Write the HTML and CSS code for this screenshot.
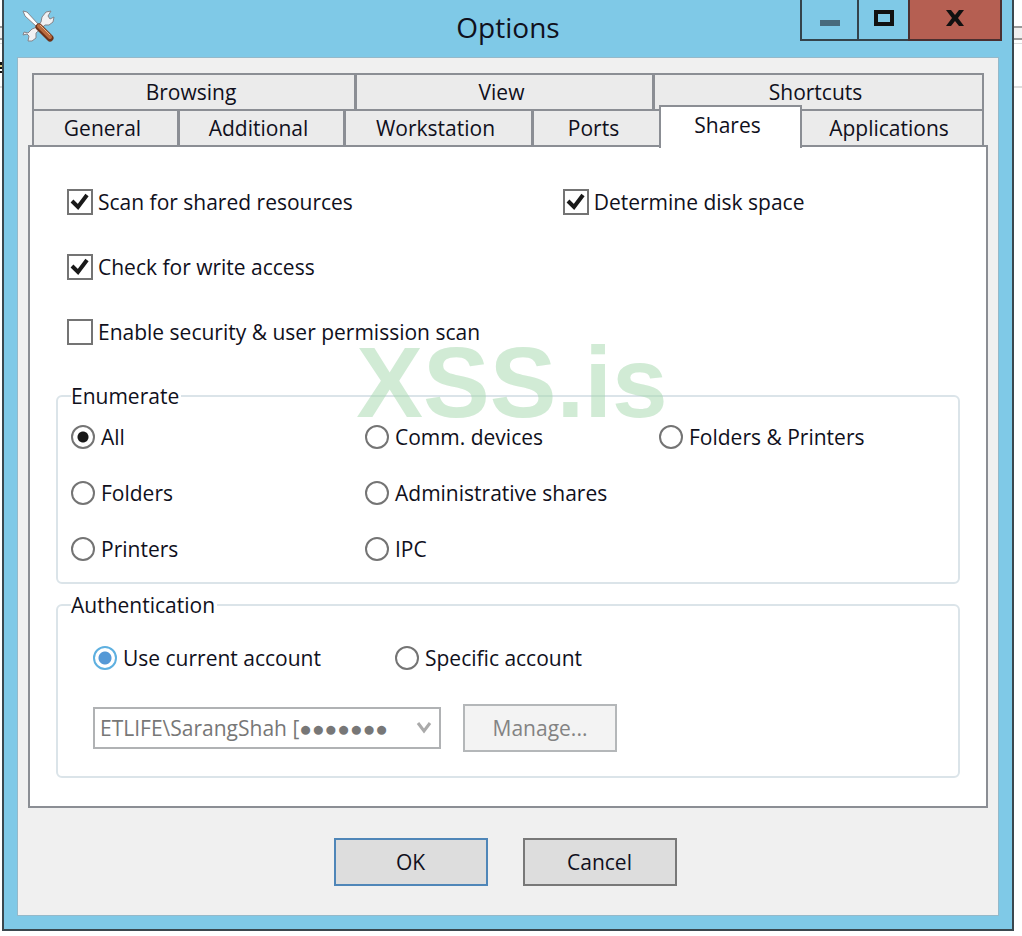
FILE: index.html
```html
<!DOCTYPE html>
<html lang="en">
<head>
    <meta charset="UTF-8">
    <meta name="viewport" content="width=device-width, initial-scale=1.0">
    <title>Options</title>
    <link rel="stylesheet" href="styles.css">
</head>
<body>
    <div class="window">
        <header class="titlebar">
            <svg class="app-icon" viewBox="0 0 34 34" aria-hidden="true">
                <path d="M2 22l4 1 4-4 5-2 4-5 1-5 4-5 5-1-3 5 2 3 4-2-1 5-4 3-4 0-9 8 0 5-4 3-4 0 1-5-2-2-4 1z" fill="#f1f1f3" stroke="#85858b"/>
                <path d="M1 1l4 1 12 13-2 2L3 6z" fill="#fff" stroke="#85858b"/>
                <path d="M17 17l11 11" stroke="#6d3319" stroke-width="7" stroke-linecap="round"/>
                <path d="M17 16l11 11" stroke="#b96b3e" stroke-width="4" stroke-linecap="round"/>
                <path d="M18 15l10 10" stroke="#e9b48b" stroke-width="1"/>
            </svg>
            <h1 class="title">Options</h1>
            <div class="window-controls">
                <button class="control" type="button" aria-label="Minimize">
                    <svg width="20" height="16" viewBox="0 0 20 16"><path d="M0 10h20v6H0z" fill="#486a7c"/></svg>
                </button>
                <button class="control maximize" type="button" aria-label="Maximize">
                    <svg width="20" height="16" viewBox="0 0 20 16"><path d="M2 2h16v12H2z" fill="none" stroke="#111" stroke-width="4"/></svg>
                </button>
                <button class="control close" type="button" aria-label="Close">
                    <svg width="20" height="16" viewBox="0 0 20 16"><path d="M1 0h5l4 5 4-5h5l-6 8 6 8h-5l-4-5-4 5H1l6-8z" fill="#111"/></svg>
                </button>
            </div>
        </header>

        <main class="client">
            <div class="tabs" role="tablist">
                <div class="tab-row row-back">
                    <button class="tab" type="button" role="tab">Browsing</button>
                    <button class="tab" type="button" role="tab">View</button>
                    <button class="tab" type="button" role="tab">Shortcuts</button>
                </div>
                <div class="tab-row row-front">
                    <button class="tab" type="button" role="tab">General</button>
                    <button class="tab" type="button" role="tab">Additional</button>
                    <button class="tab" type="button" role="tab">Workstation</button>
                    <button class="tab" type="button" role="tab">Ports</button>
                    <button class="tab selected" type="button" role="tab" aria-selected="true">Shares</button>
                    <button class="tab" type="button" role="tab">Applications</button>
                </div>
            </div>

            <section class="panel" role="tabpanel" aria-label="Shares">
                <div class="checks">
                    <label class="option"><input type="checkbox" checked><span>Scan for shared resources</span></label>
                    <label class="option"><input type="checkbox" checked><span>Determine disk space</span></label>
                    <label class="option wide"><input type="checkbox" checked><span>Check for write access</span></label>
                    <label class="option wide"><input type="checkbox"><span>Enable security &amp; user permission scan</span></label>
                </div>

                <fieldset class="group">
                    <legend>Enumerate</legend>
                    <div class="radios">
                        <label class="option"><input type="radio" name="enumerate" checked><span>All</span></label>
                        <label class="option"><input type="radio" name="enumerate"><span>Comm. devices</span></label>
                        <label class="option"><input type="radio" name="enumerate"><span>Folders &amp; Printers</span></label>
                        <label class="option"><input type="radio" name="enumerate"><span>Folders</span></label>
                        <label class="option wide"><input type="radio" name="enumerate"><span>Administrative shares</span></label>
                        <label class="option"><input type="radio" name="enumerate"><span>Printers</span></label>
                        <label class="option wide"><input type="radio" name="enumerate"><span>IPC</span></label>
                    </div>
                </fieldset>

                <fieldset class="group auth">
                    <legend>Authentication</legend>
                    <div class="accounts">
                        <label class="option"><input class="hot" type="radio" name="account" checked><span>Use current account</span></label>
                        <label class="option"><input type="radio" name="account"><span>Specific account</span></label>
                    </div>
                    <div class="credentials">
                        <select class="combo" aria-label="Account" disabled>
                            <option>ETLIFE\SarangShah [●●●●●●●</option>
                        </select>
                        <button class="btn" type="button" disabled>Manage...</button>
                    </div>
                </fieldset>
                <div class="watermark">XSS.is</div>
            </section>

            <footer class="actions">
                <button class="btn default" type="button">OK</button>
                <button class="btn" type="button">Cancel</button>
            </footer>
        </main>
    </div>
</body>
</html>
```

FILE: styles.css
```css
* { margin: 0; padding: 0; box-sizing: border-box; }

body {
    padding: 0 8px 4px 2px;
    font-family: 'Open Sans', 'Liberation Sans', sans-serif;
    font-size: 21px;
    line-height: 26px;
    color: #10101c;
    /* edges of the window behind the dialog */
    background:
        linear-gradient(#111 0 3px, #d8cb83 3px 5px, #111 5px 7px, #fff 7px 9px, #111 9px 11px) 0 62px / 3px 11px no-repeat,
        linear-gradient(#fff 26px, #999 26px 28px, #f0f0f0 28px 38px, #999 38px 40px, #fff 40px 43px, #ddd 43px 44px, #fff 44px 86px, #ddd 86px 88px, #fff 88px) no-repeat;
}

button, select { font: inherit; color: inherit; }

.window {
    background: #7fc9e7;
    border: 2px solid #3a474e;
    border-top: 0;
    padding: 0 13px 13px;
}

.titlebar {
    display: grid;
    grid-template-columns: 1fr auto 1fr;
    align-items: start;
    height: 57px;
}

.app-icon {
    width: 34px;
    height: 34px;
    margin: 10px 0 0 5px;
}

.title {
    font-size: 28px;
    font-weight: 400;
    line-height: 54px;
}

.window-controls {
    display: flex;
    justify-self: end;
    margin-right: -3px;
}

.control {
    display: flex;
    justify-content: center;
    align-items: center;
    width: 57px;
    height: 41px;
    padding-bottom: 3px;
    background: none;
    border: 2px solid #34434b;
    border-width: 0 0 2px 2px;
}

.maximize { width: 51px; }

.close {
    width: 94px;
    background: #b55f52;
    border-color: #4a2f30;
    border-right-width: 2px;
}

.client {
    background: #f0f0f0;
    border: 1px solid #94b9ca;
    padding: 15px 10px 29px;
}

.tabs { padding: 0 4px; }

.tab-row { display: grid; }

.row-back {
    grid-template-columns: 322fr 298fr 330fr;
    border-right: 2px solid #8b8e94;
}

.row-front {
    grid-template-columns: 145fr 166fr 188fr 128fr 143fr 180fr;
    border-right: 2px solid #8b8e94;
}

.tab {
    height: 36px;
    padding-right: 6px;
    background: #ebebeb;
    border: 0 solid #8b8e94;
    border-width: 2px 0 0 3px;
}

.tab:first-child { border-left-width: 2px; }

.selected {
    height: 43px;
    margin: -4px 0 -3px;
    padding-bottom: 6px;
    background: #fff;
    border-width: 2px 2px 0;
    position: relative;
    z-index: 1;
}

.selected + .tab { border-left-width: 0; }

.panel {
    position: relative;
    background: #fff;
    border: 2px solid #8b8e94;
    padding: 42px 26px 28px;
}

.checks {
    display: grid;
    grid-template-columns: 494fr 396fr;
    row-gap: 39px;
    padding-left: 11px;
    margin-bottom: 38px;
}

.option {
    display: flex;
    align-items: center;
    gap: 5px;
    white-space: nowrap;
}

.option input {
    appearance: none;
    flex: none;
    width: 26px;
    height: 26px;
    background: #fff center / 100% no-repeat;
    border: 2px solid #747474;
}

.option input[type="checkbox"]:checked {
    background-image: url("data:image/svg+xml,%3Csvg xmlns='http://www.w3.org/2000/svg' viewBox='0 0 22 22'%3E%3Cpath d='M3 10l6 6L18 4' fill='none' stroke='%23191919' stroke-width='4'/%3E%3C/svg%3E");
}

.option input[type="radio"] {
    width: 24px;
    height: 24px;
    border-radius: 50%;
}

.option input[type="radio"]:checked {
    background-image: radial-gradient(circle, #191919 5px, transparent 6px);
}

.option input.hot[type="radio"] {
    border-color: #5eb0e0;
    background-image: radial-gradient(circle, #5599d6 6px, transparent 7px);
}

.checks .wide { grid-column: 1 / -1; }

.group {
    min-width: 0;
    border: 2px solid #dbe4e9;
    border-radius: 6px;
    padding: 15px 11px 20px 13px;
    margin-bottom: 8px;
}

.group legend { padding-right: 2px; }

.radios {
    display: grid;
    grid-template-columns: 294fr 294fr 288fr;
    row-gap: 30px;
}

.radios .wide { grid-column: 2 / -1; }

.radios .option, .accounts .option { gap: 6px; }

.auth {
    padding-bottom: 24px;
    margin-bottom: 0;
}

.accounts {
    display: grid;
    grid-template-columns: 302fr 552fr;
    padding: 12px 0 33px 22px;
}

.credentials {
    display: flex;
    align-items: center;
    gap: 22px;
    padding-left: 22px;
}

.combo {
    appearance: none;
    width: 348px;
    height: 42px;
    padding: 0 32px 0 5px;
    color: #777;
    opacity: 1;
    background: #fff right 6px center / 18px no-repeat url("data:image/svg+xml,%3Csvg xmlns='http://www.w3.org/2000/svg' viewBox='0 0 18 18'%3E%3Cpath d='M3 4l6 8 6-8' fill='none' stroke='%23aaa' stroke-width='3'/%3E%3C/svg%3E");
    border: 2px solid #b0b2b4;
}

.btn {
    width: 154px;
    height: 48px;
    background: #ddd;
    border: 2px solid #787878;
}

.btn:disabled {
    color: #838383;
    background: #f3f3f3;
    border-color: #b4b7b9;
}

.default { border-color: #4f86b8; }

.actions {
    display: flex;
    justify-content: center;
    gap: 35px;
    padding-top: 30px;
    padding-right: 6px;
}

.watermark {
    position: absolute;
    top: 178px;
    left: 8px;
    right: 0;
    text-align: center;
    font: bold 100px/115px 'Liberation Sans', Arial, sans-serif;
    color: rgba(163, 216, 171, 0.5);
    pointer-events: none;
}
```
